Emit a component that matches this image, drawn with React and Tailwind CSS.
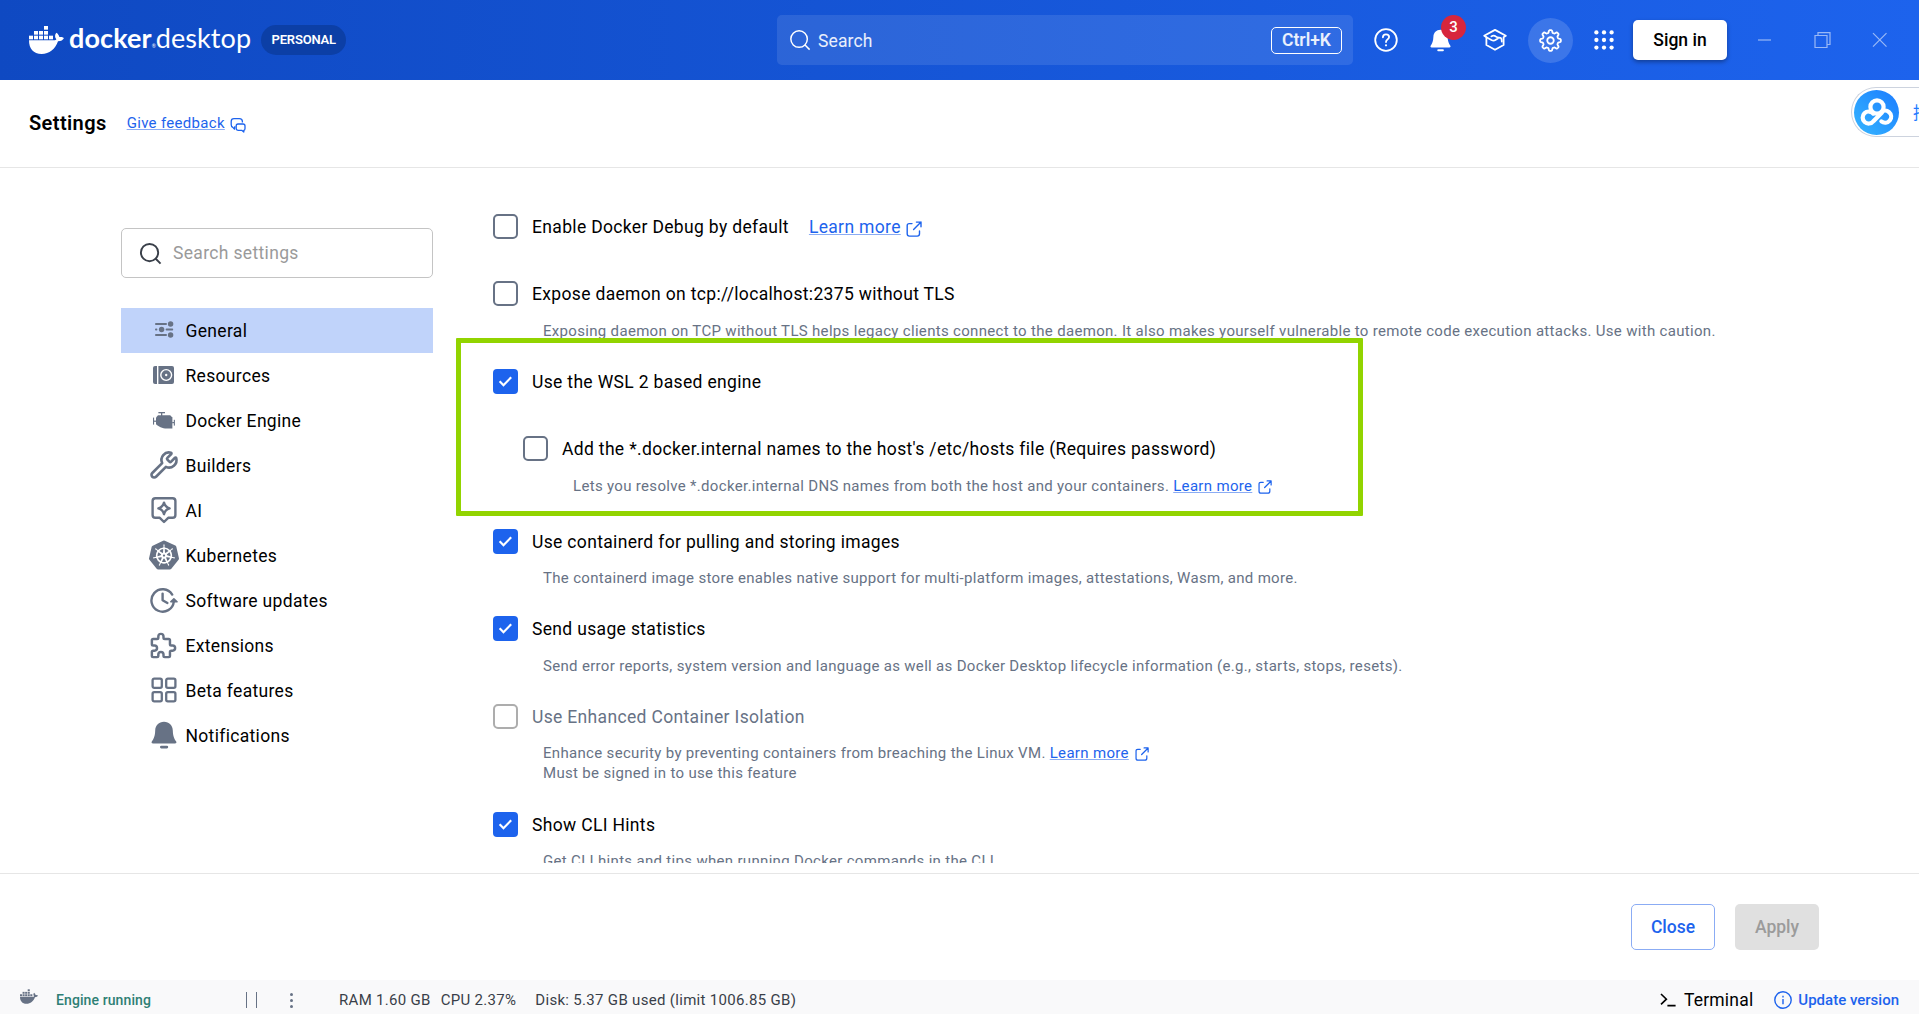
import { SiKubernetes } from "react-icons/si";
import { Wrench } from "lucide-react";

/* ---------- icons ---------- */

function Whale({ className }) {
  return (
    <svg viewBox="0 0 105 84" className={className} fill="currentColor" aria-hidden="true">
      <rect x="45" y="0" width="12" height="11" />
      <rect x="15" y="15" width="12" height="11" />
      <rect x="30" y="15" width="12" height="11" />
      <rect x="45" y="15" width="12" height="11" />
      <rect x="0" y="29" width="12" height="11" />
      <rect x="15" y="29" width="12" height="11" />
      <rect x="30" y="29" width="12" height="11" />
      <rect x="45" y="29" width="12" height="11" />
      <rect x="60" y="29" width="12" height="11" />
      <path d="M0 43H75C79 43 81 42 82 40C77 33 77 26 82 20C87 23 90 28 91 33C96 32 102 33 105 36C102 42 96 46 87 46C79 70 61 84 38 84C13 84 0 68 0 43Z" />
    </svg>
  );
}

function SearchIcon({ className, strokeWidth = 1.6 }) {
  return (
    <svg viewBox="0 0 24 24" className={className} fill="none" stroke="currentColor" strokeWidth={strokeWidth} aria-hidden="true">
      <circle cx="11" cy="11" r="9" />
      <path d="M17.2 17.2L22.5 22.5" />
    </svg>
  );
}

function FeedbackIcon() {
  return (
    <svg viewBox="0 0 16 16" className="size-4" fill="none" stroke="currentColor" strokeWidth="1.3" strokeLinejoin="round" aria-hidden="true">
      <path d="M5.5 9.8H4.6L4.6 12.2L2.8 10.4C1.6 9.8 1.2 8.6 1.2 7.4V4.4C1.2 2.6 2.2 1.6 4 1.6H9.4C11.4 1.6 12.4 2.6 12.4 4.6V5.4" />
      <path d="M8 7H13C14.4 7 15 7.6 15 9V11.4C15 12.6 14.6 13.2 13.8 13.4V15L12 13.4H8C6.8 13.4 6.2 12.8 6.2 11.6V9C6.2 7.6 6.8 7 8 7Z" />
    </svg>
  );
}

function ExternalIcon({ className }) {
  return (
    <svg viewBox="0 0 16 16" className={className} fill="none" stroke="currentColor" strokeWidth="1.4" strokeLinecap="round" strokeLinejoin="round" aria-hidden="true">
      <path d="M6 2.6H3.2C1.8 2.6 1.2 3.3 1.2 4.6V12.8C1.2 14.3 1.9 15.1 3.4 15.1H11.2C12.7 15.1 13.5 14.3 13.5 12.8V10" />
      <path d="M10.4 1.1H15V5.7M15 1.1L7.6 8.6" />
    </svg>
  );
}

function HelpIcon() {
  return (
    <svg viewBox="0 0 24 24" className="size-6" fill="none" stroke="currentColor" strokeWidth="1.8" strokeLinecap="round" aria-hidden="true">
      <circle cx="12" cy="12" r="10.8" />
      <path d="M8.9 9.3C8.9 7.5 10.2 6.4 12 6.4C13.8 6.4 15.1 7.5 15.1 9.1C15.1 11.3 12 11.6 12 14" />
      <circle cx="12" cy="17.3" r="1.1" fill="currentColor" stroke="none" />
    </svg>
  );
}

function BellIcon({ className }) {
  return (
    <svg viewBox="0 0 26 28" className={className} fill="currentColor" aria-hidden="true">
      <path d="M13 .8C18.2 .8 21.6 4.4 21.8 9.4C22 15 23.2 17.4 25.2 20.6C25.8 21.7 25.2 22.6 24 22.6H2C.8 22.6 .2 21.7 .8 20.6C2.8 17.4 4 15 4.2 9.4C4.4 4.4 7.8 .8 13 .8Z" />
      <rect x="9" y="24.8" width="8.2" height="2.6" rx="1.3" />
    </svg>
  );
}

function LearnIcon() {
  return (
    <svg viewBox="0 0 24 24" className="size-6" fill="none" stroke="currentColor" strokeWidth="1.8" strokeLinejoin="round" strokeLinecap="round" aria-hidden="true">
      <path d="M1.2 7.8L12 1.9L22.8 7.8L20.6 9.2V17L12 21.8L3.4 17V9.2Z" />
      <path d="M3.4 9.2L8.4 12C9.8 12.8 11 13 12.4 12.1L14.8 10.4M8.4 8.4C10 7.2 11.8 7.6 13 8.6C14.6 9.9 17 9.3 18 10.2C18.7 10.9 18.8 11.8 18.8 13.6" />
    </svg>
  );
}

const gearPath =
  Array.from({ length: 144 }, (_, i) => {
    const a = (i / 144) * Math.PI * 2;
    const r = 9.5 + 1.35 * Math.tanh(2.2 * Math.cos(8 * a));
    return `${i ? "L" : "M"}${(12 + r * Math.cos(a)).toFixed(2)} ${(12 + r * Math.sin(a)).toFixed(2)}`;
  }).join("") + "Z";

function GearIcon() {
  return (
    <svg viewBox="0 0 24 24" className="size-[23px]" fill="none" stroke="currentColor" strokeWidth="1.9" strokeLinejoin="round" aria-hidden="true">
      <path d={gearPath} />
      <circle cx="12" cy="12" r="3.4" />
    </svg>
  );
}

function GridIcon() {
  return (
    <svg viewBox="0 0 20 20" className="size-5" fill="currentColor" aria-hidden="true">
      {[2.4, 10, 17.6].map((y) =>
        [2.4, 10, 17.6].map((x) => <circle key={`${x}-${y}`} cx={x} cy={y} r="2.15" />)
      )}
    </svg>
  );
}

function CloudIcon() {
  return (
    <svg viewBox="0 0 34 28" className="h-7 w-[34px]" fill="none" stroke="white" strokeWidth="4.2" strokeLinecap="round" aria-hidden="true">
      <circle cx="17" cy="9" r="6.6" />
      <path d="M22 14.5L13.4 23.2A6 6 0 1 1 13.2 15.6" />
      <path d="M20.6 14.8A6 6 0 1 1 21.4 23.4" />
    </svg>
  );
}

/* ---------- sidebar icons ---------- */

function SlidersIcon() {
  return (
    <svg viewBox="0 0 20 18" className="h-[18px] w-5" fill="currentColor" aria-hidden="true">
      <rect x="1" y="2" width="12" height="1.9" rx=".9" />
      <circle cx="16.6" cy="3" r="2.7" />
      <rect x="1" y="7.6" width="2.4" height="1.9" rx=".9" />
      <circle cx="7.6" cy="8.5" r="2.7" />
      <rect x="11.6" y="7.6" width="7.6" height="1.9" rx=".9" />
      <rect x="1" y="13" width="12" height="1.9" rx=".9" />
      <circle cx="16.6" cy="14" r="2.7" />
    </svg>
  );
}

function ResourcesIcon() {
  return (
    <svg viewBox="0 0 21 18" className="h-[18px] w-[21px]" aria-hidden="true">
      <path fill="currentColor" d="M2 0H4V18H2Q0 18 0 16V2Q0 0 2 0Z" />
      <path fill="currentColor" d="M5.4 0H19Q21 0 21 2V16Q21 18 19 18H5.4Z" />
      <circle cx="13.2" cy="9" r="5.4" fill="none" stroke="white" strokeWidth="1.4" />
      <circle cx="13.2" cy="9" r="1.2" fill="white" />
    </svg>
  );
}

function EngineIcon() {
  return (
    <svg viewBox="0 0 22 17" className="h-[17px] w-[22px]" fill="currentColor" aria-hidden="true">
      <rect x="5.4" y="0" width="6.6" height="1.3" />
      <rect x="8" y="1" width="1.3" height="3" />
      <path d="M5 3.2H17.2L19.4 5.4V16.6H13.6C9.6 16.4 5 14.4 3 12.2V5.4Z" />
      <rect x="0" y="5.6" width="1.1" height="7" />
      <rect x="1" y="8.6" width="2.4" height="1.2" />
      <rect x="19.2" y="10" width="1.8" height="1.2" />
      <rect x="20.8" y="7.8" width="1.1" height="5.8" />
    </svg>
  );
}

function AiIcon() {
  return (
    <svg viewBox="0 0 26 28" className="h-7 w-[26px]" fill="none" stroke="currentColor" strokeWidth="2.4" strokeLinejoin="round" aria-hidden="true">
      <path d="M4.4 2.2H21.6Q24.4 2.2 24.4 5V19Q24.4 21.8 21.6 21.8H17.2L13 26L8.8 21.8H4.4Q1.6 21.8 1.6 19V5Q1.6 2.2 4.4 2.2Z" />
      <path strokeWidth="2.4" d="M13 6.6C13.8 10.2 15.2 11.4 18.6 12.4C15.2 13.4 13.8 14.6 13 18.2C12.2 14.6 10.8 13.4 7.4 12.4C10.8 11.4 12.2 10.2 13 6.6Z" />
    </svg>
  );
}

function UpdatesIcon() {
  return (
    <svg viewBox="0 0 28 26" className="h-[26px] w-7" fill="none" stroke="currentColor" strokeWidth="2.4" strokeLinecap="round" strokeLinejoin="round" aria-hidden="true">
      <path d="M22.2 7.6A11.2 11.2 0 1 0 23.8 14.6" />
      <path d="M12.6 6.6V13.2L17.4 16" />
      <path d="M20.8 14.8L23.9 11.8L27 14.8Z" fill="currentColor" strokeWidth="1.6" />
    </svg>
  );
}

function PuzzleIcon() {
  return (
    <svg viewBox="0 0 24 24" className="size-[31px]" fill="none" stroke="currentColor" strokeWidth="1.9" strokeLinecap="round" strokeLinejoin="round" aria-hidden="true">
      <path d="M4 7h3a1 1 0 0 0 1-1V5a2 2 0 0 1 4 0v1a1 1 0 0 0 1 1h3a1 1 0 0 1 1 1v3a1 1 0 0 0 1 1h1a2 2 0 0 1 0 4h-1a1 1 0 0 0-1 1v3a1 1 0 0 1-1 1h-3a1 1 0 0 1-1-1v-1a2 2 0 0 0-4 0v1a1 1 0 0 1-1 1H4a1 1 0 0 1-1-1v-3a1 1 0 0 1 1-1h1a2 2 0 0 0 0-4H4a1 1 0 0 1-1-1V8a1 1 0 0 1 1-1" />
    </svg>
  );
}

function BetaIcon() {
  return (
    <svg viewBox="0 0 26 26" className="size-[26px]" fill="none" stroke="currentColor" strokeWidth="2.3" aria-hidden="true">
      <rect x="1.6" y="1.6" width="9.2" height="9.2" rx="1.6" />
      <rect x="15.2" y="1.6" width="9.2" height="9.2" rx="1.6" />
      <rect x="1.6" y="15.2" width="9.2" height="9.2" rx="1.6" />
      <rect x="15.2" y="15.2" width="9.2" height="9.2" rx="1.6" />
    </svg>
  );
}

const NAV = [
  { label: "General", icon: <SlidersIcon />, active: true },
  { label: "Resources", icon: <ResourcesIcon /> },
  { label: "Docker Engine", icon: <EngineIcon /> },
  { label: "Builders", icon: <Wrench className="size-[30px]" strokeWidth={2.1} /> },
  { label: "AI", icon: <AiIcon /> },
  { label: "Kubernetes", icon: <SiKubernetes className="size-[30px]" /> },
  { label: "Software updates", icon: <UpdatesIcon /> },
  { label: "Extensions", icon: <PuzzleIcon /> },
  { label: "Beta features", icon: <BetaIcon /> },
  { label: "Notifications", icon: <BellIcon className="h-7 w-[26px]" /> },
];

/* ---------- pieces ---------- */

function Checkbox({ checked, disabled }) {
  if (checked) {
    return (
      <span className="flex size-[25px] shrink-0 items-center justify-center rounded-[4px] bg-[#1d63ed] text-white">
        <svg viewBox="0 0 16 12" className="h-[11px] w-[15px]" fill="none" stroke="currentColor" strokeWidth="2.4" aria-hidden="true">
          <path d="M1.6 5.8L5.8 10L14.2 1.4" />
        </svg>
      </span>
    );
  }
  return (
    <span
      className={
        disabled
          ? "size-[25px] shrink-0 rounded-[5px] border-2 border-[#adadad]"
          : "size-[25px] shrink-0 rounded-[5px] border-2 border-[#677285]"
      }
    />
  );
}

function Option({ label, checked, disabled, children }) {
  return (
    <div className="flex h-[25px] items-center">
      <Checkbox checked={checked} disabled={disabled} />
      <span
        className={
          disabled
            ? "mt-0.5 ml-3.5 text-[17.5px] tracking-[0.335px] text-[#677285]"
            : "mt-0.5 ml-3.5 text-[17.5px] tracking-[0.335px]"
        }
      >
        {label}
      </span>
      {children}
    </div>
  );
}

function Description({ children, className = "" }) {
  return (
    <div className={`pl-[50px] text-[15px] leading-5 tracking-[0.318px] text-[#677285] ${className}`}>{children}</div>
  );
}

function LearnMore() {
  return (
    <span className="text-[#1d63ed]">
      <span className="underline decoration-[#8bacf4] decoration-1 underline-offset-1">Learn more</span>
      <ExternalIcon className="ml-1.5 inline-block size-3.5 align-[-3px]" />
    </span>
  );
}

/* ---------- page ---------- */

function TopBar() {
  return (
    <header className="flex h-20 shrink-0 items-center bg-linear-to-r from-[#0f49c2] to-[#1d63ed] text-white">
      <div className="flex w-[777px] items-center pl-[29px]">
        <Whale className="h-7 w-[35px]" />
        <div className="mt-1 ml-[5px] flex items-baseline font-[Lato] text-[27px] leading-8">
          <span className="font-bold tracking-[0.1px]">docker</span>
          <span className="w-[4px] text-[5px]">®</span>
          <span className="tracking-[0.1px]">desktop</span>
        </div>
        <div className="ml-[10px] flex h-[30px] w-[85px] items-center justify-center rounded-full bg-[#0c3fa6] text-[13px] font-semibold tracking-[-0.2px]">
          PERSONAL
        </div>
      </div>

      <div className="flex h-[50px] w-[576px] items-center rounded-[5px] bg-white/10 pr-[11px] pl-3">
        <SearchIcon className="size-[22px]" />
        <span className="mt-0.5 ml-[7px] text-[17.5px] tracking-[0.12px] text-white/90">Search</span>
        <span className="ml-auto flex h-[27px] w-[71px] items-center justify-center rounded-[5px] border border-white pt-px text-[17.5px] font-semibold text-white/90">
          Ctrl+K
        </span>
      </div>

      <div className="ml-[21px] flex items-center">
        <HelpIcon />
        <div className="relative ml-8">
          <BellIcon className="h-[23px] w-[21px]" />
          <span className="absolute -top-[14px] left-[11px] flex size-[25px] items-center justify-center rounded-full bg-[#d7263d] text-[15px] font-medium">
            3
          </span>
        </div>
        <div className="ml-8">
          <LearnIcon />
        </div>
        <div className="ml-[21px] flex size-[45px] items-center justify-center rounded-full bg-white/15">
          <GearIcon />
        </div>
        <div className="ml-[21px]">
          <GridIcon />
        </div>
        <button className="ml-[19px] h-10 w-[94px] rounded-[5px] bg-white text-[17.5px] font-medium text-black shadow-[0_2px_4px_rgba(0,0,0,0.35)]">
          Sign in
        </button>
        <svg viewBox="0 0 130 16" className="ml-[31px] h-4 w-[130px] text-white/55" fill="none" stroke="currentColor" strokeWidth="1.2" aria-hidden="true">
          <path d="M0 8H13" />
          <path d="M57 3.5H69V15.5H57ZM60 3.5V.6H72V12.5H69" />
          <path d="M115 1.2L128.5 14.7M128.5 1.2L115 14.7" />
        </svg>
      </div>
    </header>
  );
}

function Sidebar() {
  return (
    <nav className="w-[312px] shrink-0 pt-[60px]">
      <div className="flex h-[50px] items-center rounded-[5px] border border-[#c4c4c4] pl-[17px]">
        <SearchIcon className="size-[23px] text-[#393f49]" strokeWidth={2} />
        <span className="ml-[11px] text-[17.5px] tracking-[0.34px] text-[#9a9a9a]">Search settings</span>
      </div>
      <ul className="mt-[30px]">
        {NAV.map((item) => (
          <li
            key={item.label}
            className={
              item.active
                ? "flex h-[45px] items-center bg-[#c0d3fa] pl-[26.5px]"
                : "flex h-[45px] items-center pl-[26.5px]"
            }
          >
            <span className="flex w-8 justify-center pb-px text-[#677285]">{item.icon}</span>
            <span className="mt-0.5 ml-[6px] text-[17.5px] tracking-[0.32px]">{item.label}</span>
          </li>
        ))}
      </ul>
    </nav>
  );
}

function Options() {
  return (
    <div className="ml-5 flex h-[695px] flex-1 flex-col overflow-hidden pt-[46px] pl-10 whitespace-nowrap">
      <Option label="Enable Docker Debug by default">
        <span className="mt-0.5 ml-5 flex items-center text-[17.5px] tracking-[0.33px] text-[#1d63ed]">
          <span className="underline decoration-[#8bacf4] decoration-1 underline-offset-1">Learn more</span>
          <ExternalIcon className="mt-0.5 ml-[5px] size-4" />
        </span>
      </Option>

      <div className="mt-[42px]">
        <Option label="Expose daemon on tcp://localhost:2375 without TLS" />
      </div>
      <Description className="mt-[15px]">
        Exposing daemon on TCP without TLS helps legacy clients connect to the daemon. It also makes yourself vulnerable
        to remote code execution attacks. Use with caution.
      </Description>

      <div className="relative mt-7">
        <div className="absolute -top-[31px] -left-[37px] h-[178px] w-[907px] rounded-[1px] border-5 border-[#92d400]" />
        <Option label="Use the WSL 2 based engine" checked />
        <div className="mt-[42px] ml-[30px]">
          <Option label="Add the *.docker.internal names to the host's /etc/hosts file (Requires password)" />
          <Description className="mt-[15px]">
            Lets you resolve *.docker.internal DNS names from both the host and your containers. <LearnMore />
          </Description>
        </div>
      </div>

      <div className="mt-[33px]">
        <Option label="Use containerd for pulling and storing images" checked />
      </div>
      <Description className="mt-[14px]">
        The containerd image store enables native support for multi-platform images, attestations, Wasm, and more.
      </Description>

      <div className="mt-7">
        <Option label="Send usage statistics" checked />
      </div>
      <Description className="mt-[15px]">
        Send error reports, system version and language as well as Docker Desktop lifecycle information (e.g., starts,
        stops, resets).
      </Description>

      <div className="mt-7">
        <Option label="Use Enhanced Container Isolation" disabled />
      </div>
      <Description className="mt-[14px]">
        Enhance security by preventing containers from breaching the Linux VM. <LearnMore />
        <br />
        Must be signed in to use this feature
      </Description>

      <div className="mt-[29px]">
        <Option label="Show CLI Hints" checked />
      </div>
      <Description className="mt-[14px]">Get CLI hints and tips when running Docker commands in the CLI.</Description>
    </div>
  );
}

export default function App() {
  return (
    <div className="flex h-[1014px] w-[1919px] flex-col overflow-hidden bg-white font-[Roboto,sans-serif] text-black">
      <TopBar />

      <div className="flex h-[88px] shrink-0 items-center border-b border-[#e6e6e6] pl-[29px]">
        <h1 className="mb-0.5 text-[20px] font-semibold tracking-[0.4px]">Settings</h1>
        <a className="ml-5 flex items-center text-[15px] tracking-[0.31px] text-[#1d63ed]">
          <span className="mb-px underline decoration-[#8bacf4] decoration-1 underline-offset-1">Give feedback</span>
          <span className="mt-0.5 ml-[5px]">
            <FeedbackIcon />
          </span>
        </a>
        <div className="mb-[23px] ml-auto flex h-[50px] w-[68px] items-center overflow-hidden rounded-l-full border border-r-0 border-[#cdd3de] pl-0.5">
          <span className="flex size-[45px] shrink-0 items-center justify-center rounded-full bg-linear-to-tr from-[#38b6ff] to-[#1f7bff]">
            <CloudIcon />
          </span>
          <span className="ml-[14px] font-['Noto_Sans_CJK_SC',sans-serif] text-[17px] whitespace-nowrap text-[#1f7bff]">
            拖
          </span>
        </div>
      </div>

      <main className="flex h-[705px] shrink-0 pl-[121px]">
        <Sidebar />
        <Options />
      </main>

      <div className="flex h-[107px] shrink-0 items-center justify-end gap-5 border-t border-[#e6e6e6] pr-[100px]">
        <button className="h-[46px] w-[84px] rounded-[5px] border border-[#8bacf4] text-[17.5px] font-medium text-[#1d63ed]">
          Close
        </button>
        <button className="h-[46px] w-[84px] rounded-[5px] bg-[#e0e0e0] text-[17.5px] font-medium text-[#9b9b9b]">
          Apply
        </button>
      </div>

      <footer className="flex h-[34px] shrink-0 items-center bg-[#f9f9fa] pt-1.5 text-[15px] text-[#393f49]">
        <Whale className="mb-2 ml-5 h-[15px] w-[18px] text-[#677285]" />
        <span className="ml-[18px] text-[14px] font-medium tracking-[0.1px] text-[#2e7f74]">Engine running</span>
        <span className="ml-[95px] flex h-4 w-[11px] justify-between border-x-[1.5px] border-[#677285]" />
        <span className="ml-[33px] flex flex-col gap-[3px]">
          <i className="size-[3px] rounded-full bg-[#677285]" />
          <i className="size-[3px] rounded-full bg-[#677285]" />
          <i className="size-[3px] rounded-full bg-[#677285]" />
        </span>
        <span className="ml-[46px] tracking-[0.3px]">RAM 1.60 GB</span>
        <span className="ml-[10px] tracking-[0.3px]">CPU 2.37%</span>
        <span className="ml-[19px] tracking-[0.31px]">Disk: 5.37 GB used (limit 1006.85 GB)</span>
        <svg viewBox="0 0 16 14" className="ml-auto h-3.5 w-4 text-black" fill="none" stroke="currentColor" strokeWidth="1.6" aria-hidden="true">
          <path d="M1 1L6.4 6.2L1 11.4M7.4 12.6H15.6" />
        </svg>
        <span className="ml-2 text-[17.5px] tracking-[0.2px] text-black">Terminal</span>
        <svg viewBox="0 0 18 18" className="ml-[21px] size-[18px] text-[#1d63ed]" fill="none" stroke="currentColor" strokeWidth="1.4" aria-hidden="true">
          <circle cx="9" cy="9" r="8.2" />
          <path d="M9 8V13.2M9 4.8V6.4" />
        </svg>
        <span className="mr-5 ml-[6px] font-medium text-[#1d63ed]">Update version</span>
      </footer>
    </div>
  );
}
